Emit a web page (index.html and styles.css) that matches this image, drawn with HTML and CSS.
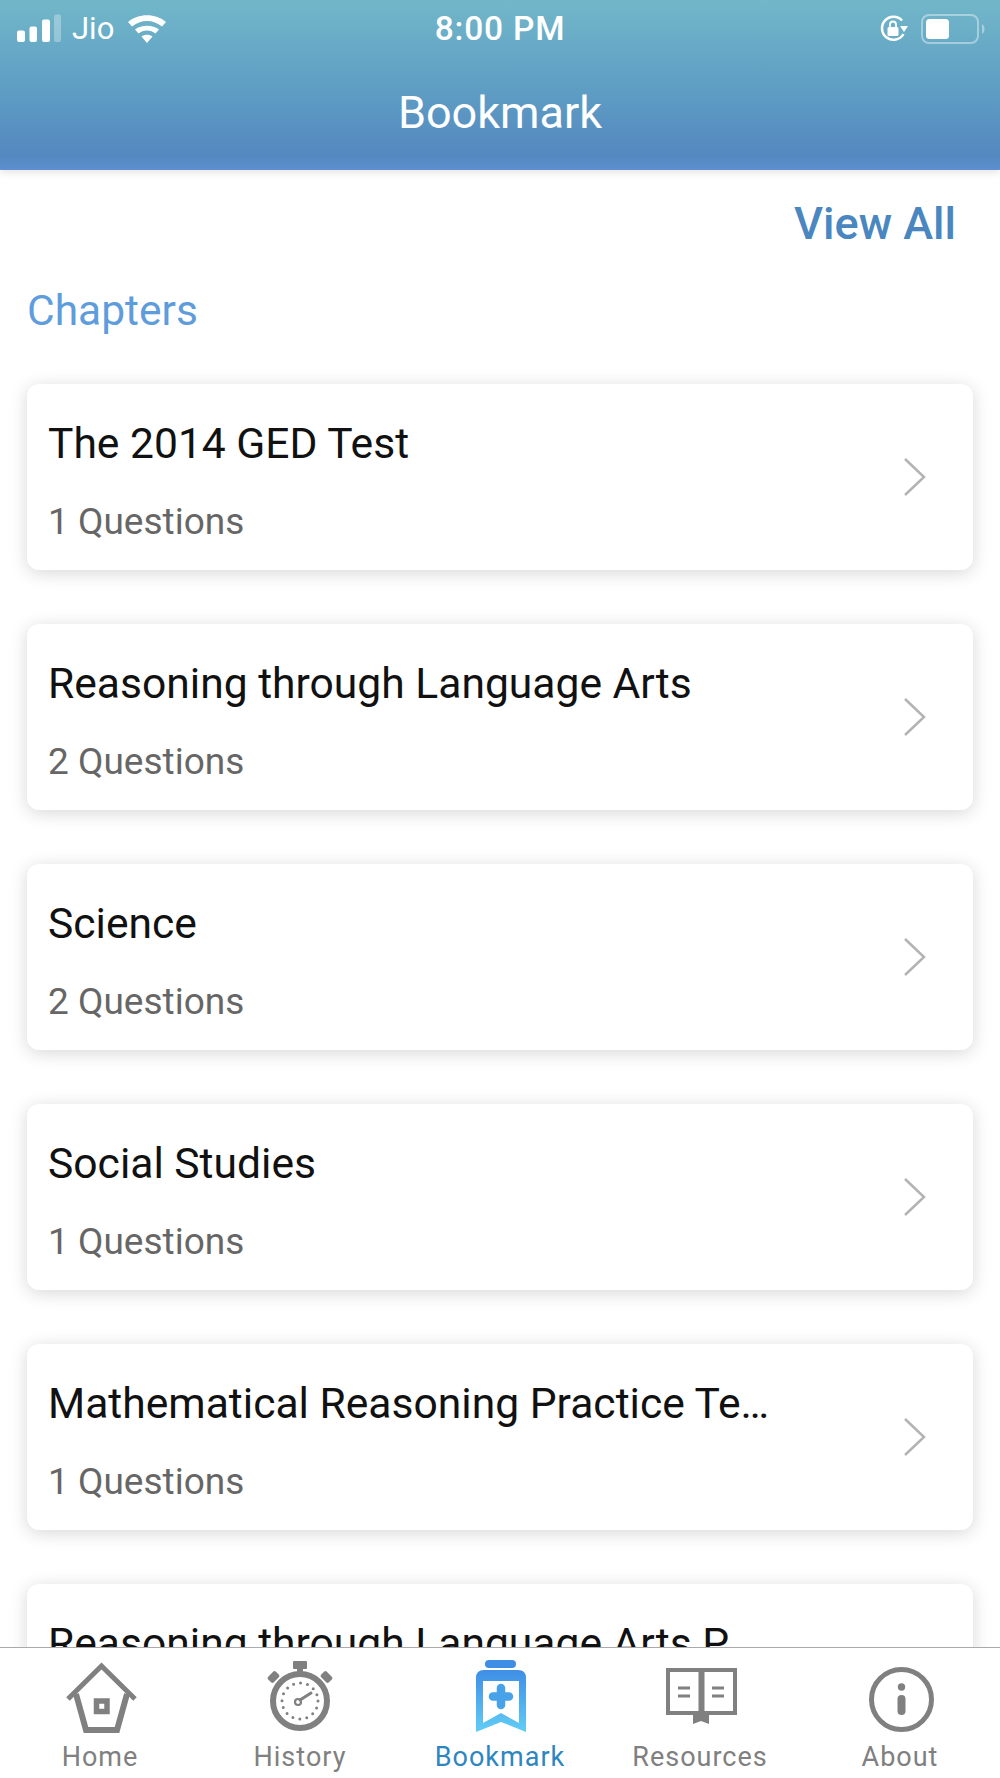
FILE: index.html
```html
<!DOCTYPE html>
<html lang="en">
<head>
<meta charset="utf-8">
<title>Bookmark</title>
<link rel="stylesheet" href="styles.css">
</head>
<body>
<div class="app">
  <header class="header">
    <div class="status">
      <div class="status-left">
        <svg class="signal" viewBox="0 0 44 30"><rect x="0" y="16.500" width="8" height="11.500" rx="2" fill="#fff"/><rect x="12.500" y="12.500" width="7.500" height="15.500" rx="2" fill="#fff"/><rect x="25" y="5.500" width="8" height="22.500" rx="2" fill="#fff"/><rect x="37" y="0.500" width="7" height="27.500" rx="2" fill="#fff" fill-opacity=".3"/></svg>
        <span class="carrier">Jio</span>
        <svg class="wifi" viewBox="0 0 40 30"><path d="M20 29 14.500 22.500C17.500 20 22.500 20 25.500 22.500Z" fill="#fff"/><path d="M11.500 19.500 8 15.500C14.500 10.500 25.500 10.500 32 15.500L28.500 19.500C23.500 15.500 16.500 15.500 11.500 19.500Z" fill="#fff"/><path d="M5 12.500 1 8C11 -1 29 -1 39 8L35 12.500C26.500 5 13.500 5 5 12.500Z" fill="#fff"/></svg>
      </div>
      <div class="clock">8:00 PM</div>
      <div class="status-right">
        <svg class="lock" viewBox="0 0 30 30"><path d="M24.500 20A11.500 11.500 0 1 1 23 6.500" fill="none" stroke="#fff" stroke-width="2.500"/><path d="M21 12h8l-4 6z" fill="#fff"/><rect x="8.500" y="13" width="11" height="9" rx="1.500" fill="#fff"/><path d="M11 13v-2.500a3 3 0 0 1 6 0V13" fill="none" stroke="#fff" stroke-width="1.800"/></svg>
        <svg class="battery" viewBox="0 0 64 30"><rect x="1" y="1" width="56" height="28" rx="7" fill="none" stroke="#fff" stroke-opacity=".4" stroke-width="2"/><rect x="5" y="5" width="23" height="20" rx="3.500" fill="#fff"/><path d="M61 10c2 1 2.500 3 2.500 5s-.5 4-2.500 5z" fill="#fff" fill-opacity=".4"/></svg>
      </div>
    </div>
    <h1 class="title">Bookmark</h1>
  </header>

  <main class="content">
    <div class="view-all">View All</div>
    <h2 class="section">Chapters</h2>
    <ul class="cards">
      <li class="card"><div class="card-text"><div class="card-title">The 2014 GED Test</div><div class="card-sub">1 Questions</div></div><svg class="chev" viewBox="0 0 24 40"><path d="M2 2 21 20 2 38" fill="none" stroke="#b3b3b3" stroke-width="2.500"/></svg></li>
      <li class="card"><div class="card-text"><div class="card-title">Reasoning through Language Arts</div><div class="card-sub">2 Questions</div></div><svg class="chev" viewBox="0 0 24 40"><path d="M2 2 21 20 2 38" fill="none" stroke="#b3b3b3" stroke-width="2.500"/></svg></li>
      <li class="card"><div class="card-text"><div class="card-title">Science</div><div class="card-sub">2 Questions</div></div><svg class="chev" viewBox="0 0 24 40"><path d="M2 2 21 20 2 38" fill="none" stroke="#b3b3b3" stroke-width="2.500"/></svg></li>
      <li class="card"><div class="card-text"><div class="card-title">Social Studies</div><div class="card-sub">1 Questions</div></div><svg class="chev" viewBox="0 0 24 40"><path d="M2 2 21 20 2 38" fill="none" stroke="#b3b3b3" stroke-width="2.500"/></svg></li>
      <li class="card"><div class="card-text"><div class="card-title">Mathematical Reasoning Practice Te…</div><div class="card-sub">1 Questions</div></div><svg class="chev" viewBox="0 0 24 40"><path d="M2 2 21 20 2 38" fill="none" stroke="#b3b3b3" stroke-width="2.500"/></svg></li>
      <li class="card"><div class="card-text"><div class="card-title">Reasoning through Language Arts P…</div><div class="card-sub">1 Questions</div></div><svg class="chev" viewBox="0 0 24 40"><path d="M2 2 21 20 2 38" fill="none" stroke="#b3b3b3" stroke-width="2.500"/></svg></li>
    </ul>
  </main>

  <nav class="tabs">
    <div class="tab">
      <svg class="tab-icon" viewBox="0 0 72 72"><path d="M4 38 37.500 5 71 38" fill="none" stroke="#808080" stroke-width="5"/><path d="M12 33 22 69H53L63 33" fill="none" stroke="#808080" stroke-width="6"/><rect x="32.500" y="40" width="10.500" height="10.500" fill="none" stroke="#808080" stroke-width="5.500"/></svg>
      <span>Home</span>
    </div>
    <div class="tab">
      <svg class="tab-icon" viewBox="0 0 72 72">
        <rect x="29" y="0" width="14" height="8" rx="1" fill="#808080"/><rect x="33" y="6" width="6" height="7" fill="#808080"/>
        <rect x="4" y="12" width="11" height="8" rx="2" transform="rotate(-45 9.500 16)" fill="#808080"/><rect x="57" y="12" width="11" height="8" rx="2" transform="rotate(45 62.500 16)" fill="#808080"/>
        <circle cx="36" cy="40" r="27" fill="none" stroke="#808080" stroke-width="6"/>
        <circle cx="36" cy="40" r="18" fill="none" stroke="#808080" stroke-width="3" stroke-linecap="round" stroke-dasharray="0 7.070"/>
        <circle cx="34" cy="41" r="3" fill="none" stroke="#808080" stroke-width="2.200"/><path d="M36 39 47 32" stroke="#808080" stroke-width="3" stroke-linecap="round"/>
      </svg>
      <span>History</span>
    </div>
    <div class="tab tab-active">
      <svg class="tab-icon" viewBox="0 0 72 72">
        <defs><linearGradient id="bm" x1="0" y1="0" x2="0" y2="1"><stop offset="0" stop-color="#3f8ee6"/><stop offset="1" stop-color="#62cdf5"/></linearGradient></defs>
        <rect x="21" y="-1" width="31" height="8" rx="4" fill="#3f8ee6"/>
        <path d="M20 9H54Q62 9 62 17V71L37 61 12 71V17Q12 9 20 9Z" fill="url(#bm)"/>
        <path d="M19 20V62L37 52 55 62V20Z" fill="#fff"/>
        <path d="M37 27V44M29 35.500H45" fill="none" stroke="#48a2ea" stroke-width="8.500" stroke-linecap="round"/>
      </svg>
      <span>Bookmark</span>
    </div>
    <div class="tab">
      <svg class="tab-icon" viewBox="0 0 72 72">
        <path d="M4 9H71V52H4Z" fill="none" stroke="#808080" stroke-width="4"/><rect x="34.500" y="7" width="6" height="47" fill="#808080"/><path d="M29 52H45V63L37 60 29 63Z" fill="#808080"/>
        <path d="M14 27H26M14 35H26M48 27H60M48 35H60" stroke="#808080" stroke-width="3"/>
      </svg>
      <span>Resources</span>
    </div>
    <div class="tab">
      <svg class="tab-icon" viewBox="0 0 72 72">
        <circle cx="37.500" cy="38.500" r="30" fill="none" stroke="#808080" stroke-width="5"/><circle cx="37.500" cy="26" r="3.700" fill="#808080"/><rect x="33.500" y="34" width="8" height="20" rx="4" fill="#808080"/>
      </svg>
      <span>About</span>
    </div>
  </nav>
</div>
</body>
</html>
```

FILE: styles.css
```css
* { box-sizing: border-box; }
html, body { margin: 0; padding: 0; background: #fff; }
body { font-family: Roboto, "Liberation Sans", sans-serif; }
.app { width: 1000px; height: 1778px; display: flex; flex-direction: column; overflow: hidden; }

.header {
  height: 170px;
  flex: none;
  color: #fff;
  background: linear-gradient(180deg, #72b7c9 0%, #5f9fc4 50%, #5488c0 92%, #5c90cf 100%);
  box-shadow: 0 2px 8px rgba(0,0,0,.12);
  position: relative;
  z-index: 1;
}
.status { height: 56px; padding-top: 2px; display: grid; grid-template-columns: 1fr auto 1fr; align-items: center; }
.status-left { display: flex; align-items: center; padding-left: 17px; }
.signal { width: 44px; height: 30px; }
.carrier { margin-left: 11px; font-size: 31px; line-height: 36px; }
.wifi { width: 40px; height: 30px; margin-left: 13px; }
.clock { font-size: 33.500px; font-weight: 500; letter-spacing: .8px; line-height: 36px; }
.status-right { display: flex; align-items: center; justify-content: flex-end; padding-right: 15px; }
.lock { width: 30px; height: 30px; }
.battery { width: 64px; height: 30px; margin-left: 12px; }
.title { margin: 0; padding-top: 32px; text-align: center; font-size: 45px; font-weight: 400; line-height: 50px; }

.content { flex: 1; min-height: 0; overflow: hidden; }
.view-all { padding: 27px 44px 0 0; text-align: right; font-size: 45px; font-weight: 500; line-height: 54px; color: #4a86c0; }
.section { margin: 0; padding: 36px 0 0 27px; font-size: 42.500px; font-weight: 400; line-height: 48px; color: #5f9cdc; }
.cards { list-style: none; margin: 0; padding: 49px 27px 0; display: flex; flex-direction: column; gap: 54px; }
.card {
  height: 186px;
  flex: none;
  display: flex;
  align-items: center;
  justify-content: space-between;
  padding: 0 46px 0 21px;
  background: #fff;
  border-radius: 12px;
  box-shadow: 0 3px 18px rgba(0,0,0,.16);
}
.card-text { padding-top: 7px; }
.card-title { font-size: 42.600px; line-height: 46px; color: #111; }
.card-sub { margin-top: 36px; font-size: 37px; line-height: 40px; color: #666; }
.chev { width: 24px; height: 40px; flex: none; }

.tabs {
  height: 131px;
  flex: none;
  display: grid;
  grid-template-columns: repeat(5, 1fr);
  background: #fff;
  border-top: 1px solid #aaa;
  position: relative;
  z-index: 1;
}
.tab { display: flex; flex-direction: column; align-items: center; padding-top: 13px; font-size: 27px; letter-spacing: 1px; line-height: 30px; color: #808080; }
.tab-icon { width: 72px; height: 72px; flex: none; margin-bottom: 9px; overflow: visible; }
.tab-active { color: #2e86c1; }
```
